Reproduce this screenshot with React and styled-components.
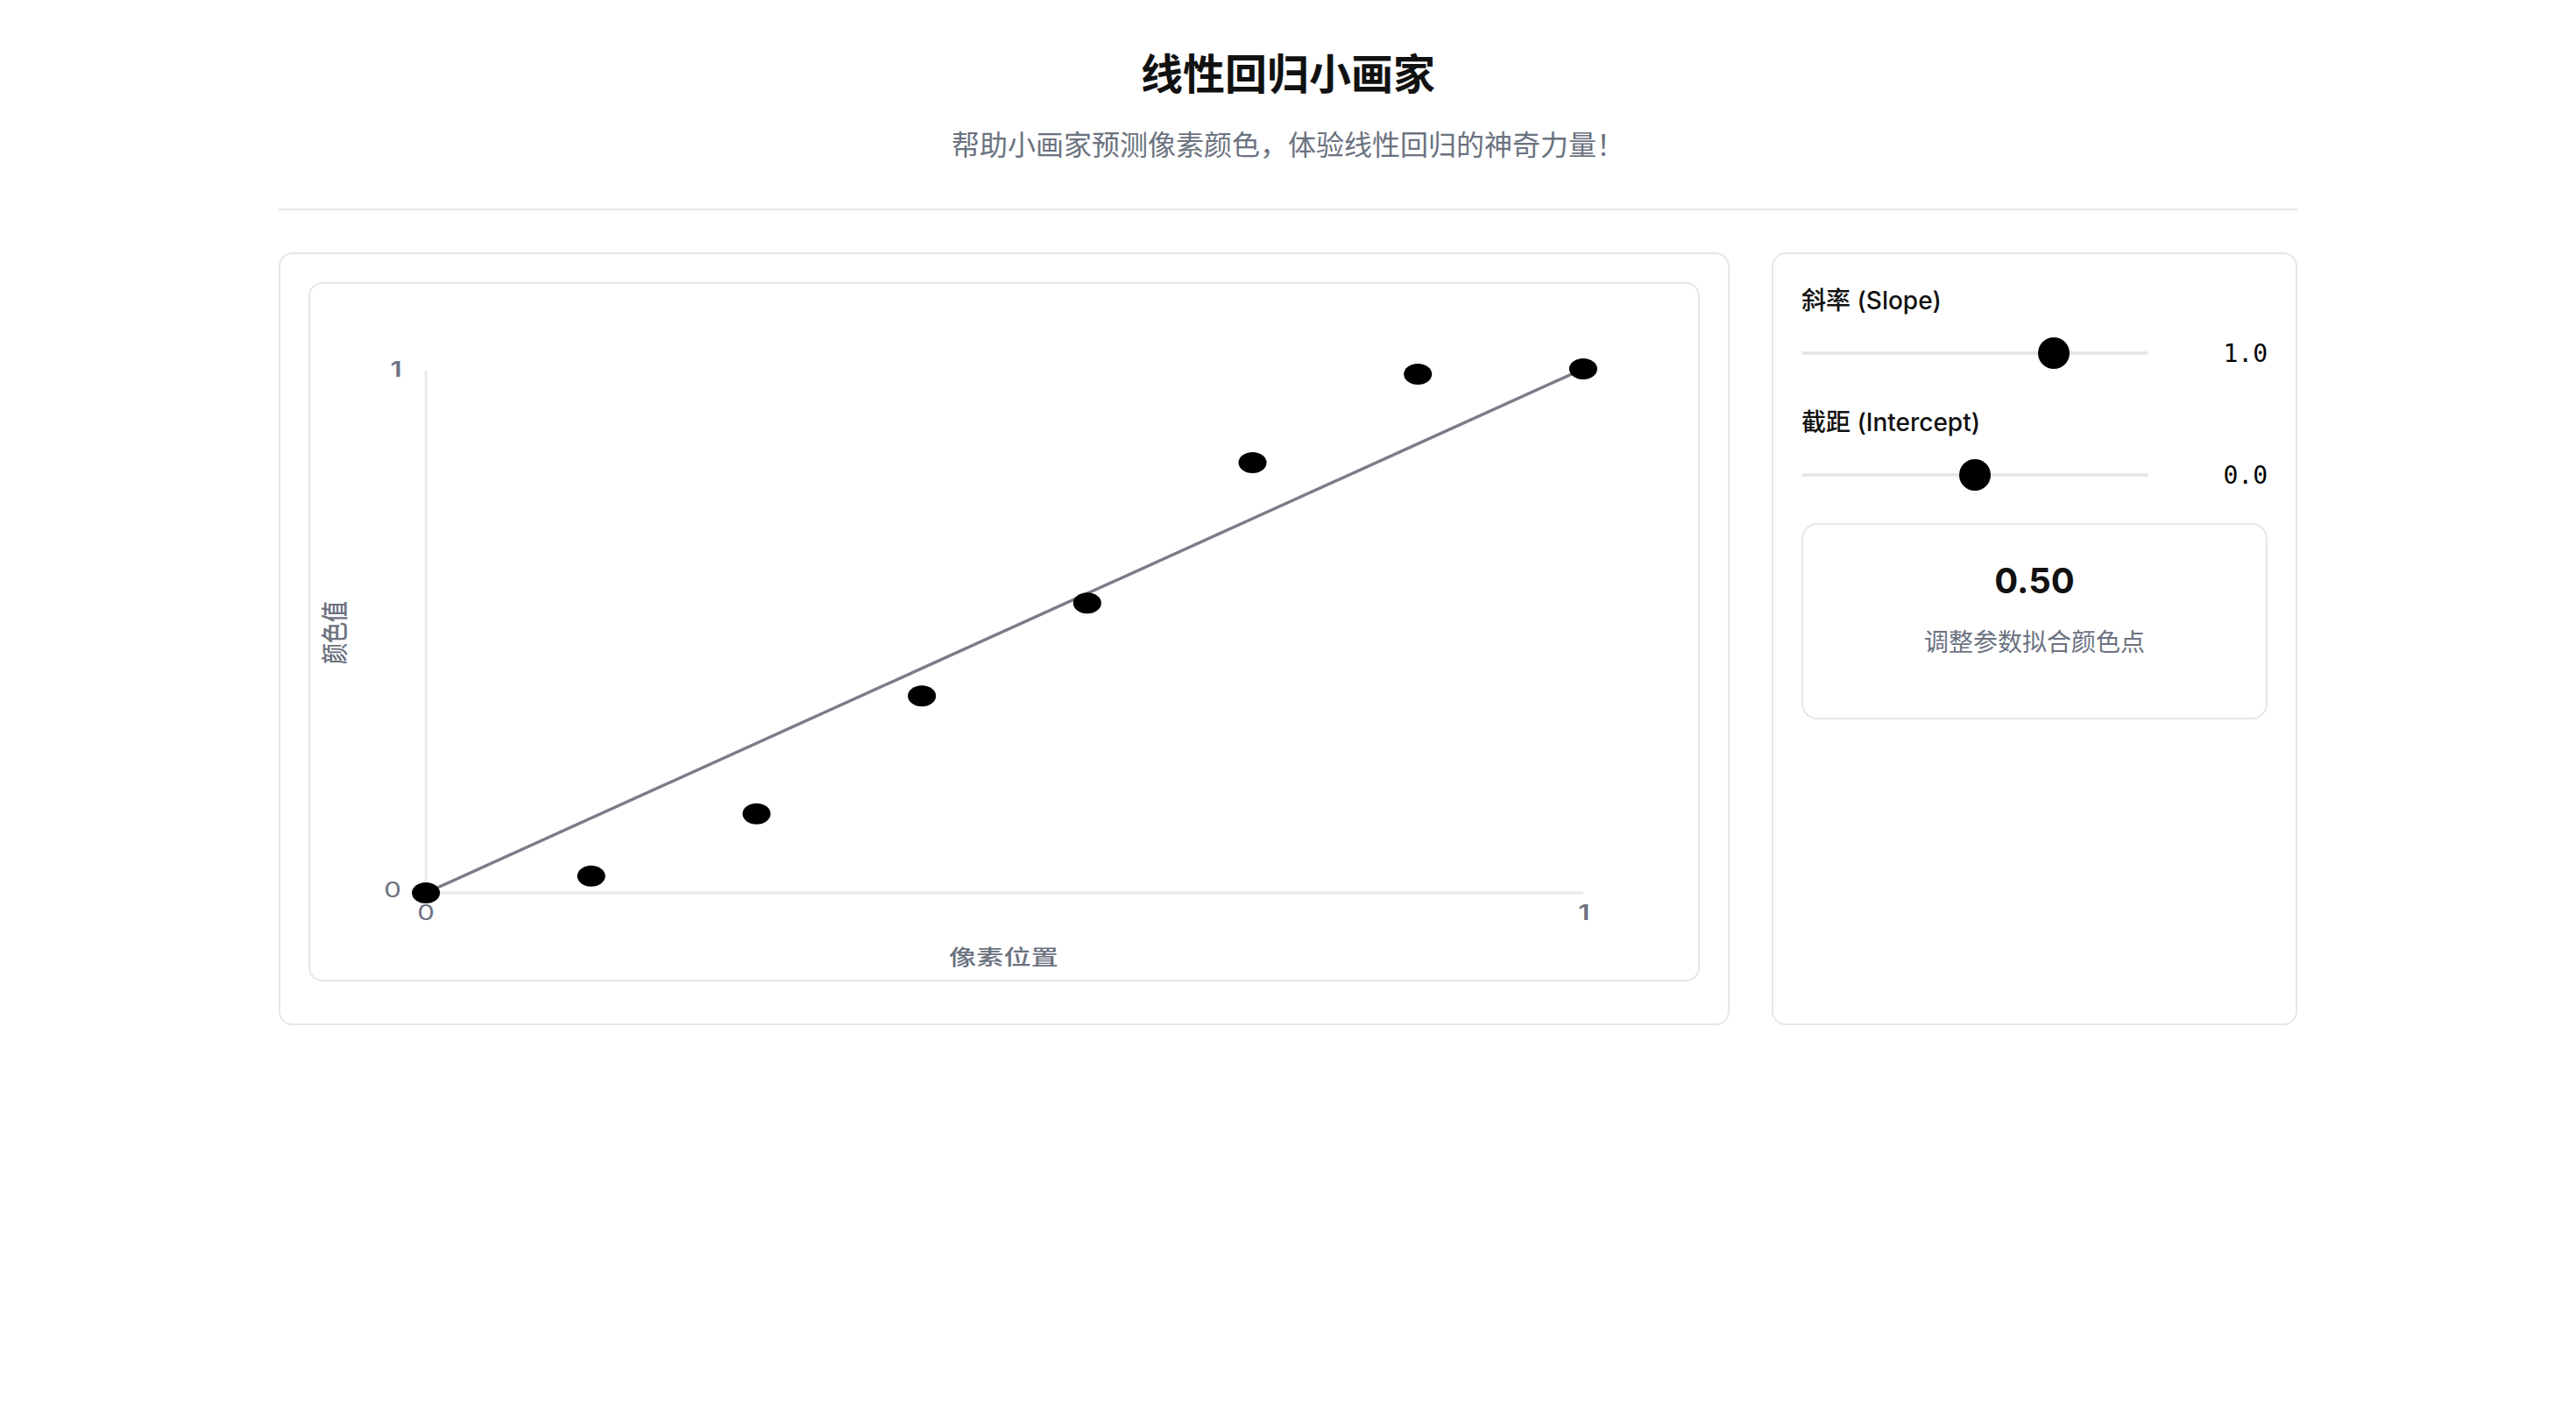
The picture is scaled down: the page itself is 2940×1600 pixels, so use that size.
import styled, { createGlobalStyle } from 'styled-components';
import { useState } from 'react';

const GlobalStyle = createGlobalStyle`
  body {
    margin: 0;
    background: #ffffff;
    font-family: Inter, "Noto Sans CJK SC", sans-serif;
    color: #111111;
  }
`;

const Page = styled.div`
  max-width: 2304px;
  margin: 0 auto;
  padding-top: 53px;
`;

const Header = styled.header`
  text-align: center;
  padding-bottom: 48px;
  border-bottom: 2px solid #e5e7eb;
`;

const Title = styled.h1`
  margin: 0;
  font-size: 48px;
  line-height: 64px;
  font-weight: 700;
  color: #111111;
`;

const Subtitle = styled.p`
  margin: 25px 0 0;
  font-size: 32px;
  line-height: 48px;
  color: #6b7280;
`;

const Main = styled.div`
  display: flex;
  gap: 48px;
  margin-top: 48px;
  align-items: stretch;
`;

const Card = styled.div`
  border: 2px solid #e5e7eb;
  border-radius: 16px;
  background: #fff;
  box-sizing: border-box;
`;

const ChartCard = styled(Card)`
  flex: 1;
  padding: 32px 32px 48px;
`;

const ChartBox = styled.div`
  height: 798px;
  border: 2px solid #e5e7eb;
  border-radius: 16px;
  box-sizing: border-box;
  overflow: hidden;
`;

const ControlCard = styled(Card)`
  width: 600px;
  padding: 33px 32px 32px;
`;

const Group = styled.div`
  margin-bottom: ${(p) => p.$gap}px;
`;

const Label = styled.div`
  font-size: 28px;
  line-height: 40px;
  font-weight: 500;
  color: #111111;
  margin-bottom: 18px;
`;

const SliderRow = styled.div`
  display: flex;
  align-items: center;
  gap: 32px;
  height: 44px;
`;

const Range = styled.input`
  flex: 1;
  margin: 0;
  height: 36px;
  background: transparent;
  -webkit-appearance: none;
  appearance: none;

  &::-webkit-slider-runnable-track {
    height: 4px;
    border-radius: 2px;
    background: #e5e7eb;
  }
  &::-webkit-slider-thumb {
    -webkit-appearance: none;
    width: 36px;
    height: 36px;
    margin-top: -16px;
    border-radius: 50%;
    background: #000;
    border: none;
  }
`;

const Value = styled.span`
  width: 104px;
  text-align: right;
  font-family: "DejaVu Sans Mono", "Liberation Mono", monospace;
  font-size: 28px;
  color: #000;
`;

const ResultBox = styled.div`
  border: 2px solid #e5e7eb;
  border-radius: 18px;
  min-height: 224px;
  box-sizing: border-box;
  padding: 36px 32px;
  text-align: center;
`;

const Score = styled.div`
  font-size: 40px;
  line-height: 56px;
  font-weight: 700;
  color: #111111;
`;

const Hint = styled.div`
  margin-top: 22px;
  font-size: 28px;
  line-height: 40px;
  color: #6b7280;
`;

const DATA = [0, 0.032, 0.151, 0.376, 0.553, 0.821, 0.99, 1.0];

// chart area in px inside the chart box
const X0 = 132;
const X1 = 1452;
const Y0 = 695;
const Y1 = 97;

const px = (v) => X0 + v * (X1 - X0);
const py = (v) => Y0 - v * (Y0 - Y1);

const AxisText = ({ x, y, children, rotate, weight }) => (
  <text
    transform={`translate(${x} ${y}) ${rotate ? 'rotate(-90)' : ''} scale(${rotate ? '1 1.3' : '1.3 1'})`}
    textAnchor="middle"
    dominantBaseline="central"
    fontSize="24"
    fontWeight={weight || 500}
    fill="#6b7280"
    fontFamily='Inter, "Noto Sans CJK SC", sans-serif'
  >
    {children}
  </text>
);

function Chart({ slope, intercept }) {
  const lineY = (x) => py(slope * x + intercept);
  return (
    <svg width="100%" height="100%" viewBox="0 0 1583 794" preserveAspectRatio="none">
      <line x1={X0} y1={Y1 + 2} x2={X0} y2={Y0} stroke="#e8e9ec" strokeWidth="3" />
      <line x1={X0} y1={Y0} x2={X1} y2={Y0} stroke="#e8e9ec" strokeWidth="3" />
      <AxisText x={98} y={97} weight={600}>1</AxisText>
      <AxisText x={94} y={691} weight={400}>0</AxisText>
      <AxisText x={132} y={717} weight={400}>0</AxisText>
      <AxisText x={1453} y={717} weight={600}>1</AxisText>
      <AxisText x={791} y={768}>像素位置</AxisText>
      <AxisText x={28} y={398} rotate>颜色值</AxisText>
      <line
        x1={px(0)}
        y1={lineY(0)}
        x2={px(1)}
        y2={lineY(1)}
        stroke="#7a7c88"
        strokeWidth="3.5"
      />
      {DATA.map((v, i) => (
        <ellipse key={i} cx={px(i / 7)} cy={py(v)} rx="16" ry="12" fill="#000" />
      ))}
    </svg>
  );
}

function App() {
  const [slope, setSlope] = useState(1);
  const [intercept, setIntercept] = useState(0);

  return (
    <Page>
      <GlobalStyle />
      <Header>
        <Title>线性回归小画家</Title>
        <Subtitle>帮助小画家预测像素颜色，体验线性回归的神奇力量！</Subtitle>
      </Header>
      <Main>
        <ChartCard>
          <ChartBox>
            <Chart slope={slope} intercept={intercept} />
          </ChartBox>
        </ChartCard>
        <ControlCard>
          <Group $gap={37}>
            <Label>斜率 (Slope)</Label>
            <SliderRow>
              <Range
                type="range"
                min={-2}
                max={2}
                step={0.1}
                value={slope}
                onChange={(e) => setSlope(Number(e.target.value))}
              />
              <Value>{slope.toFixed(1)}</Value>
            </SliderRow>
          </Group>
          <Group $gap={33}>
            <Label>截距 (Intercept)</Label>
            <SliderRow>
              <Range
                type="range"
                min={-1}
                max={1}
                step={0.1}
                value={intercept}
                onChange={(e) => setIntercept(Number(e.target.value))}
              />
              <Value>{intercept.toFixed(1)}</Value>
            </SliderRow>
          </Group>
          <ResultBox>
            <Score>0.50</Score>
            <Hint>调整参数拟合颜色点</Hint>
          </ResultBox>
        </ControlCard>
      </Main>
    </Page>
  );
}

export default App;
